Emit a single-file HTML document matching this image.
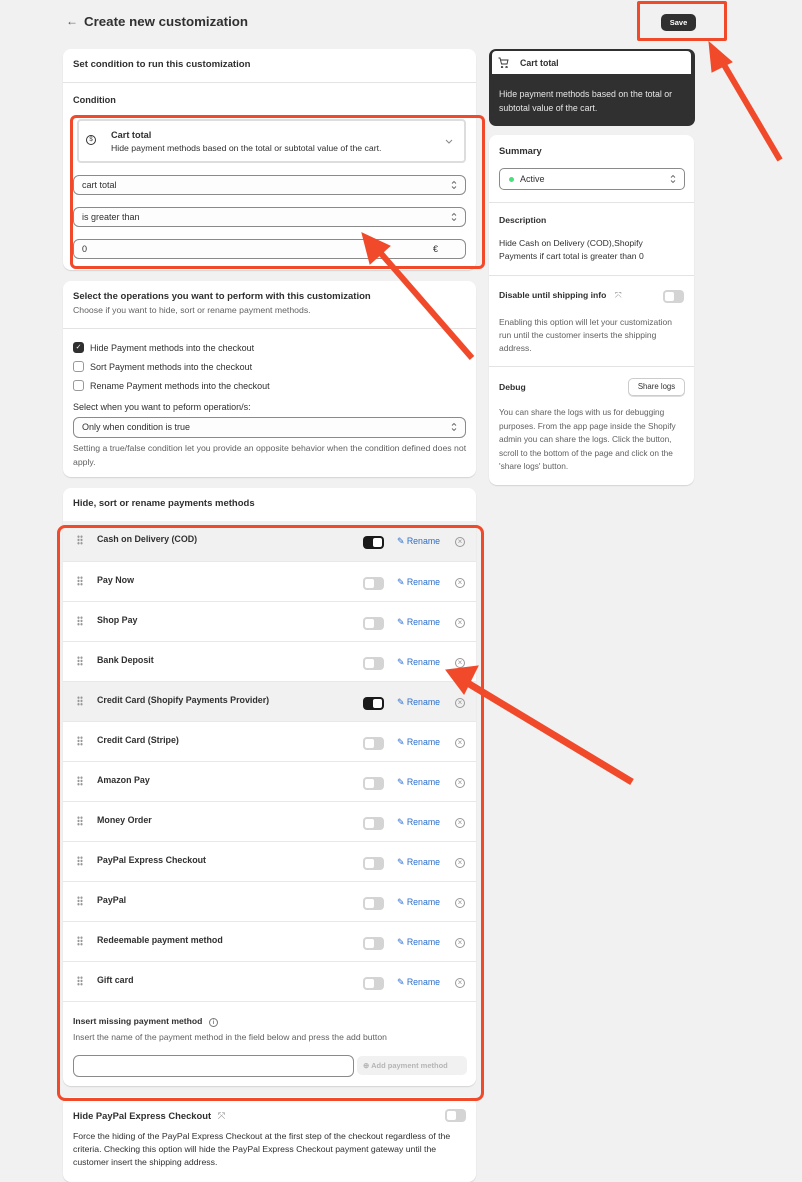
<!DOCTYPE html>
<html><head><meta charset="utf-8"><style>
*{box-sizing:border-box;margin:0;padding:0}
body{width:802px;height:1170px;background:#f1f1f1;font-family:"Liberation Sans",sans-serif;color:#303030;position:relative;overflow:hidden;font-size:9px}
.a{position:absolute}
.card{position:absolute;background:#fff;border-radius:8px;box-shadow:0 1px 1px rgba(0,0,0,.12)}
.b{font-weight:bold}
.sel{position:absolute;left:73px;width:393px;height:20px;border:1px solid #8a8a8a;border-radius:6px;background:#fdfdfd;padding-left:8px;line-height:18px;font-size:9px}
.ch{position:absolute;right:8px;top:4px;width:6px;height:10px}
.div{position:absolute;left:0;right:0;height:1px;background:#e3e3e3}
.cb{position:absolute;left:73px;width:11px;height:11px;border:1px solid #999;border-radius:3px;background:#fff}
.row{position:absolute;left:63px;width:413px;height:40px;border-top:1px solid #e8e8e8}
.row.g{background:#f1f1f1}
.row .dots{position:absolute;left:14px;top:14px;width:6px;height:10px;background:radial-gradient(circle,#999 1px,transparent 1.3px) 0 0/3px 3.3px}
.row .nm{position:absolute;left:34px;top:13px;font-weight:bold;font-size:8.9px}
.tg{position:absolute;left:300px;top:15px;width:21px;height:13px;border-radius:4px;background:#d4d4d4}
.tg::after{content:"";position:absolute;left:2px;top:2px;width:9px;height:9px;border-radius:2px;background:#fff}
.tg.on{background:#1a1a1a}.tg.on::after{left:10px}
.rn{position:absolute;left:334px;top:15px;color:#2c6ecb;font-size:8.8px}
.x{position:absolute;left:392px;top:16px;width:10px;height:10px;border:1px solid #999;border-radius:50%;color:#999;font-size:8px;line-height:8px;text-align:center}
.red{position:absolute;border:3px solid #f04a2b;border-radius:6px}
.g2{color:#616161}
</style></head><body>
<svg width="0" height="0" style="position:absolute"><defs><symbol id="ud" viewBox="0 0 6 10"><path d="M1 3.5L3 1.5L5 3.5M1 6.5L3 8.5L5 6.5" fill="none" stroke="#666" stroke-width="0.9"/></symbol></defs></svg>
<div class="a" style="left:66px;top:14px;font-size:12px;color:#555">←</div>
<div class="a b" style="left:84px;top:14px;font-size:13.3px;color:#303030">Create new customization</div>
<div class="a b" style="left:661px;top:14px;width:35px;height:17px;background:#303030;color:#fff;border-radius:5px;font-size:7.5px;text-align:center;line-height:17px">Save</div>
<div class="red" style="left:637px;top:1px;width:90px;height:40px;border-radius:2px"></div>

<!-- card1 -->
<div class="card" style="left:63px;top:49px;width:413px;height:221px">
 <div class="a b" style="left:10px;top:10px;font-size:9.6px">Set condition to run this customization</div>
 <div class="div" style="top:33px"></div>
 <div class="a b" style="left:10px;top:46px;font-size:9.2px">Condition</div>
 <div class="a" style="left:14px;top:70px;width:389px;height:44px;border:2px solid #ddd;border-radius:4px;background:#fff">
  <div class="a" style="left:7px;top:14px;width:10px;height:10px;border:1px solid #333;border-radius:50%;font-size:6px;text-align:center;line-height:8px">$</div>
  <div class="a b" style="left:32px;top:9px;font-size:9.2px">Cart total</div>
  <div class="a" style="left:32px;top:22px;font-size:8.7px">Hide payment methods based on the total or subtotal value of the cart.</div>
  <svg class="a" style="left:366px;top:18px" width="8" height="5"><path d="M1 1L4 4L7 1" fill="none" stroke="#888"/></svg>
 </div>
</div>
<div class="sel" style="top:175px">cart total<svg class="ch"><use href="#ud"/></svg></div>
<div class="sel" style="top:207px">is greater than<svg class="ch"><use href="#ud"/></svg></div>
<div class="sel" style="top:239px">0<span style="position:absolute;right:27px">€</span></div>
<div class="red" style="left:70px;top:115px;width:415px;height:154px"></div>

<!-- card2 -->
<div class="card" style="left:63px;top:281px;width:413px;height:196px">
 <div class="a b" style="left:10px;top:10px;font-size:9.5px">Select the operations you want to perform with this customization</div>
 <div class="a g2" style="left:10px;top:24px;font-size:8.7px">Choose if you want to hide, sort or rename payment methods.</div>
 <div class="div" style="top:47px"></div>
 <div class="a" style="left:27px;top:62px">Hide Payment methods into the checkout</div>
 <div class="a" style="left:27px;top:81px">Sort Payment methods into the checkout</div>
 <div class="a" style="left:27px;top:100px">Rename Payment methods into the checkout</div>
 <div class="a" style="left:10px;top:121px">Select when you want to peform operation/s:</div>
 <div class="a g2" style="left:10px;top:160px;font-size:8.7px;line-height:14px;width:400px">Setting a true/false condition let you provide an opposite behavior when the condition defined does not apply.</div>
</div>
<div class="cb" style="top:342px;background:#303030;border-color:#303030;color:#fff;font-size:7px;line-height:9px;text-align:center">✓</div>
<div class="cb" style="top:361px"></div>
<div class="cb" style="top:380px"></div>
<div class="sel" style="top:417px;height:21px">Only when condition is true<svg class="ch"><use href="#ud"/></svg></div>

<!-- card4 (behind red box) -->
<div class="card" style="left:63px;top:1097px;width:413px;height:85px">
 <div class="a b" style="left:10px;top:13px;font-size:9.4px">Hide PayPal Express Checkout <span style="color:#888;font-weight:normal;margin-left:4px">⤧</span></div>
 <div class="tg" style="left:382px;top:12px"></div>
 <div class="a" style="left:10px;top:33px;width:400px;font-size:8.7px;line-height:13px">Force the hiding of the PayPal Express Checkout at the first step of the checkout regardless of the criteria. Checking this option will hide the PayPal Express Checkout payment gateway until the customer insert the shipping address.</div>
</div>

<!-- card3 -->
<div class="card" style="left:63px;top:488px;width:413px;height:598px">
 <div class="a b" style="left:10px;top:10px;font-size:9.5px">Hide, sort or rename payments methods</div>
 <div class="a b" style="left:10px;top:528px;font-size:8.6px">Insert missing payment method <span style="font-weight:normal;display:inline-block;width:9px;height:9px;border:1px solid #777;border-radius:50%;font-size:6px;text-align:center;line-height:8px;margin-left:4px">i</span></div>
 <div class="a g2" style="left:10px;top:544px;font-size:8.6px">Insert the name of the payment method in the field below and press the add button</div>
 <div class="a" style="left:10px;top:567px;width:281px;height:22px;border:1px solid #8a8a8a;border-radius:6px"></div>
 <div class="a b" style="left:294px;top:568px;width:110px;height:19px;background:#f1f1f1;border-radius:5px;color:#b5b5b5;font-size:7.5px;line-height:19px;padding-left:6px">⊕ Add payment method</div>
</div>
<div class="row g" style="top:521px;border-top:none"><div class="dots"></div><div class="nm">Cash on Delivery (COD)</div><div class="tg on"></div><div class="rn">✎ Rename</div><div class="x">×</div></div>
<div class="row" style="top:561px"><div class="dots"></div><div class="nm">Pay Now</div><div class="tg"></div><div class="rn">✎ Rename</div><div class="x">×</div></div>
<div class="row" style="top:601px"><div class="dots"></div><div class="nm">Shop Pay</div><div class="tg"></div><div class="rn">✎ Rename</div><div class="x">×</div></div>
<div class="row" style="top:641px"><div class="dots"></div><div class="nm">Bank Deposit</div><div class="tg"></div><div class="rn">✎ Rename</div><div class="x">×</div></div>
<div class="row g" style="top:681px"><div class="dots"></div><div class="nm">Credit Card (Shopify Payments Provider)</div><div class="tg on"></div><div class="rn">✎ Rename</div><div class="x">×</div></div>
<div class="row" style="top:721px"><div class="dots"></div><div class="nm">Credit Card (Stripe)</div><div class="tg"></div><div class="rn">✎ Rename</div><div class="x">×</div></div>
<div class="row" style="top:761px"><div class="dots"></div><div class="nm">Amazon Pay</div><div class="tg"></div><div class="rn">✎ Rename</div><div class="x">×</div></div>
<div class="row" style="top:801px"><div class="dots"></div><div class="nm">Money Order</div><div class="tg"></div><div class="rn">✎ Rename</div><div class="x">×</div></div>
<div class="row" style="top:841px"><div class="dots"></div><div class="nm">PayPal Express Checkout</div><div class="tg"></div><div class="rn">✎ Rename</div><div class="x">×</div></div>
<div class="row" style="top:881px"><div class="dots"></div><div class="nm">PayPal</div><div class="tg"></div><div class="rn">✎ Rename</div><div class="x">×</div></div>
<div class="row" style="top:921px"><div class="dots"></div><div class="nm">Redeemable payment method</div><div class="tg"></div><div class="rn">✎ Rename</div><div class="x">×</div></div>
<div class="row" style="top:961px"><div class="dots"></div><div class="nm">Gift card</div><div class="tg"></div><div class="rn">✎ Rename</div><div class="x">×</div></div>
<div class="row" style="top:1001px;height:1px"></div>
<div class="red" style="left:57px;top:525px;width:427px;height:576px;border-radius:8px"></div>

<!-- right -->
<div class="a" style="left:489px;top:49px;width:206px;height:77px;background:#303030;border-radius:7px">
 <div class="a" style="left:3px;top:2px;width:199px;height:23px;background:#fff;border-radius:4px 4px 0 0">
  <svg class="a" style="left:6px;top:6px" width="11" height="11" viewBox="0 0 11 11"><path d="M0.5 1H2L3.5 7H9L10 3H2.6M4 9.5a.7.7 0 1 0 .1 0M8.5 9.5a.7.7 0 1 0 .1 0" fill="none" stroke="#333" stroke-width="0.9"/></svg>
  <div class="a b" style="left:28px;top:7px;font-size:8.8px">Cart total</div>
 </div>
 <div class="a" style="left:10px;top:38px;width:192px;color:#e6e6e6;font-size:8.8px;line-height:14px">Hide payment methods based on the total or subtotal value of the cart.</div>
</div>
<div class="card" style="left:489px;top:135px;width:205px;height:350px">
 <div class="a b" style="left:10px;top:10px;font-size:9.4px">Summary</div>
 <div class="a" style="left:10px;top:33px;width:186px;height:22px;border:1px solid #8a8a8a;border-radius:5px;line-height:20px;padding-left:20px">Active
  <span class="a" style="left:9px;top:8px;width:5px;height:5px;border-radius:50%;background:#4ade80"></span>
  <svg class="ch" style="top:5px"><use href="#ud"/></svg></div>
 <div class="div" style="top:67px"></div>
 <div class="a b" style="left:10px;top:80px;font-size:8.6px">Description</div>
 <div class="a" style="left:10px;top:102px;width:180px;font-size:8.6px;line-height:13px">Hide Cash on Delivery (COD),Shopify Payments if cart total is greater than 0</div>
 <div class="div" style="top:140px"></div>
 <div class="a b" style="left:10px;top:155px;font-size:8.6px">Disable until shipping info <span style="color:#888;font-weight:normal;margin-left:6px">⤧</span></div>
 <div class="tg" style="left:174px;top:155px"></div>
 <div class="a g2" style="left:10px;top:181px;width:186px;font-size:8.5px;line-height:13px">Enabling this option will let your customization run until the customer inserts the shipping address.</div>
 <div class="div" style="top:231px"></div>
 <div class="a b" style="left:10px;top:247px;font-size:8.6px">Debug</div>
 <div class="a" style="left:139px;top:243px;width:57px;height:18px;border:1px solid #ccc;border-radius:5px;font-size:7.8px;text-align:center;line-height:16px;box-shadow:0 1px 0 #ddd">Share logs</div>
 <div class="a g2" style="left:10px;top:271px;width:194px;font-size:8.3px;line-height:13.5px">You can share the logs with us for debugging purposes. From the app page inside the Shopify admin you can share the logs. Click the button, scroll to the bottom of the page and click on the 'share logs' button.</div>
</div>

<svg class="a" style="left:0;top:0" width="802" height="1170">
 <g fill="#f04a2b" stroke="#f04a2b">
  <line x1="780" y1="160" x2="720" y2="58" stroke-width="6"/>
  <polygon points="709,42 732,62 712,72" />
  <line x1="472" y1="358" x2="378" y2="250" stroke-width="6"/>
  <polygon points="362,233 390,246 370,264"/>
  <line x1="632" y1="782" x2="466" y2="682" stroke-width="7"/>
  <polygon points="446,670 478,666 464,694"/>
 </g>
</svg>
</body></html>
